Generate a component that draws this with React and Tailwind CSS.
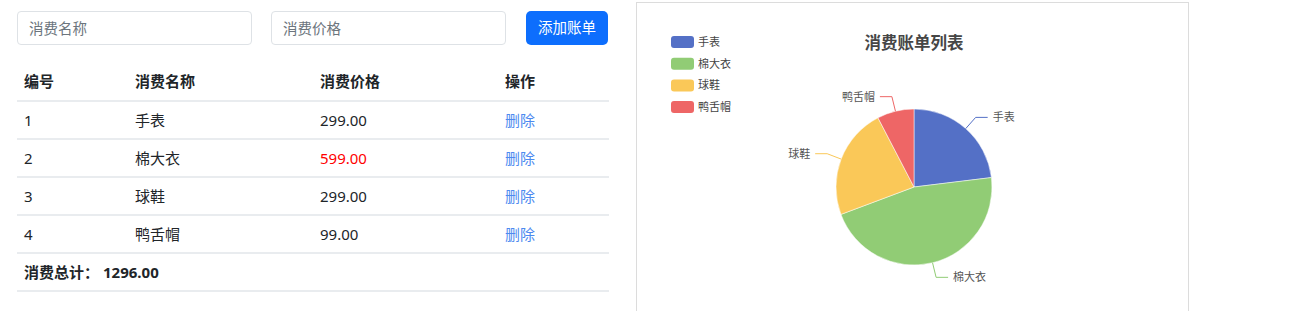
import { useState } from "react";

const bills = [
  { id: 1, name: "手表", price: 299 },
  { id: 2, name: "棉大衣", price: 599 },
  { id: 3, name: "球鞋", price: 299 },
  { id: 4, name: "鸭舌帽", price: 99 },
];

const colors = ["#5470c6", "#91cc75", "#fac858", "#ee6666"];

// pie geometry, in panel coordinates
const CX = 277;
const CY = 184;
const R = 78;

const pt = (deg, r) => {
  const a = (deg * Math.PI) / 180;
  return [CX + r * Math.sin(a), CY - r * Math.cos(a)];
};

const PieChart = ({ data }) => {
  const total = data.reduce((s, d) => s + d.price, 0);
  let start = 0;
  const slices = data.map((d, i) => {
    const sweep = (d.price / total) * 360;
    const end = start + sweep;
    const mid = start + sweep / 2;
    const [x1, y1] = pt(start, R);
    const [x2, y2] = pt(end, R);
    const large = sweep > 180 ? 1 : 0;
    const path = `M${CX},${CY} L${x1},${y1} A${R},${R} 0 ${large} 1 ${x2},${y2} Z`;
    const [ax, ay] = pt(mid, R);
    const [bx, by] = pt(mid, R + 15);
    const right = Math.sin((mid * Math.PI) / 180) >= 0;
    const cx2 = right ? bx + 12 : bx - 12;
    start = end;
    return { ...d, color: colors[i], path, line: `M${ax},${ay} L${bx},${by} L${cx2},${by}`, lx: right ? cx2 + 5 : cx2 - 5, ly: by, right };
  });

  return (
    <svg width="552" height="320" className="block">
      <text x="277" y="46" textAnchor="middle" fontSize="16.5" fontWeight="700" fill="#464646">
        消费账单列表
      </text>
      {slices.map((s, i) => (
        <g key={s.id}>
          <rect x="34" y={33 + i * 21.7} width="23" height="12" rx="3" fill={s.color} />
          <text x="61" y={43 + i * 21.7} fontSize="11" fill="#444">
            {s.name}
          </text>
        </g>
      ))}
      {slices.map((s) => (
        <path key={s.id} d={s.path} fill={s.color} stroke="#fff" strokeWidth="0.5" />
      ))}
      {slices.map((s) => (
        <g key={s.id}>
          <path d={s.line} fill="none" stroke={s.color} strokeWidth="1" />
          <text x={s.lx} y={s.ly + 4} fontSize="11" fill="#555" textAnchor={s.right ? "start" : "end"}>
            {s.name}
          </text>
        </g>
      ))}
    </svg>
  );
};

const App = () => {
  const [name, setName] = useState("");
  const [price, setPrice] = useState("");
  const total = bills.reduce((s, b) => s + b.price, 0);

  return (
    <div
      className="flex items-start pt-[2px] pl-[17px] bg-white h-[311px] overflow-hidden text-[#212529]"
      style={{ fontFamily: '"Noto Sans", "Noto Sans CJK SC", sans-serif' }}
    >
      <div className="w-[592px] pt-[9px]">
        <div className="flex items-center">
          <input
            value={name}
            onChange={(e) => setName(e.target.value)}
            placeholder="消费名称"
            className="w-[235px] h-[34px] px-[11px] text-[14.5px] border border-[#dee2e6] rounded-[4px] outline-none placeholder:text-[#6c757d]"
          />
          <input
            value={price}
            onChange={(e) => setPrice(e.target.value)}
            placeholder="消费价格"
            className="ml-[19px] w-[235px] h-[34px] px-[11px] text-[14.5px] border border-[#dee2e6] rounded-[4px] outline-none placeholder:text-[#6c757d]"
          />
          <button className="ml-[20px] w-[82px] h-[34px] bg-[#0d6efd] text-white text-[14.5px] rounded-[5px]">
            添加账单
          </button>
        </div>

        <table className="mt-[18px] w-full border-collapse text-[15px]">
          <thead>
            <tr className="h-[38px] border-b-2 border-[#e9ecef] text-left font-bold">
              <th className="w-[111px] pl-[7px]">编号</th>
              <th className="w-[185px] pl-[7px]">消费名称</th>
              <th className="w-[185px] pl-[7px]">消费价格</th>
              <th className="pl-[7px]">操作</th>
            </tr>
          </thead>
          <tbody>
            {bills.map((b) => (
              <tr key={b.id} className="h-[38px] border-b-2 border-[#e9ecef]">
                <td className="pl-[7px]">{b.id}</td>
                <td className="pl-[7px]">{b.name}</td>
                <td className={`pl-[7px] ${b.price > 500 ? "text-[#ff0000]" : ""}`}>{b.price.toFixed(2)}</td>
                <td className="pl-[7px]">
                  <span className="text-[#4d8af0] cursor-pointer">删除</span>
                </td>
              </tr>
            ))}
            <tr className="h-[38px] border-b-2 border-[#e9ecef] font-bold">
              <td colSpan={4} className="pl-[7px]">
                消费总计：<span className="ml-[4px]">{total.toFixed(2)}</span>
              </td>
            </tr>
          </tbody>
        </table>
      </div>

      <div className="ml-[27px] w-[553px] h-[320px] border border-[#dcdcdc] bg-white">
        <PieChart data={bills} />
      </div>
    </div>
  );
};

export default App;
